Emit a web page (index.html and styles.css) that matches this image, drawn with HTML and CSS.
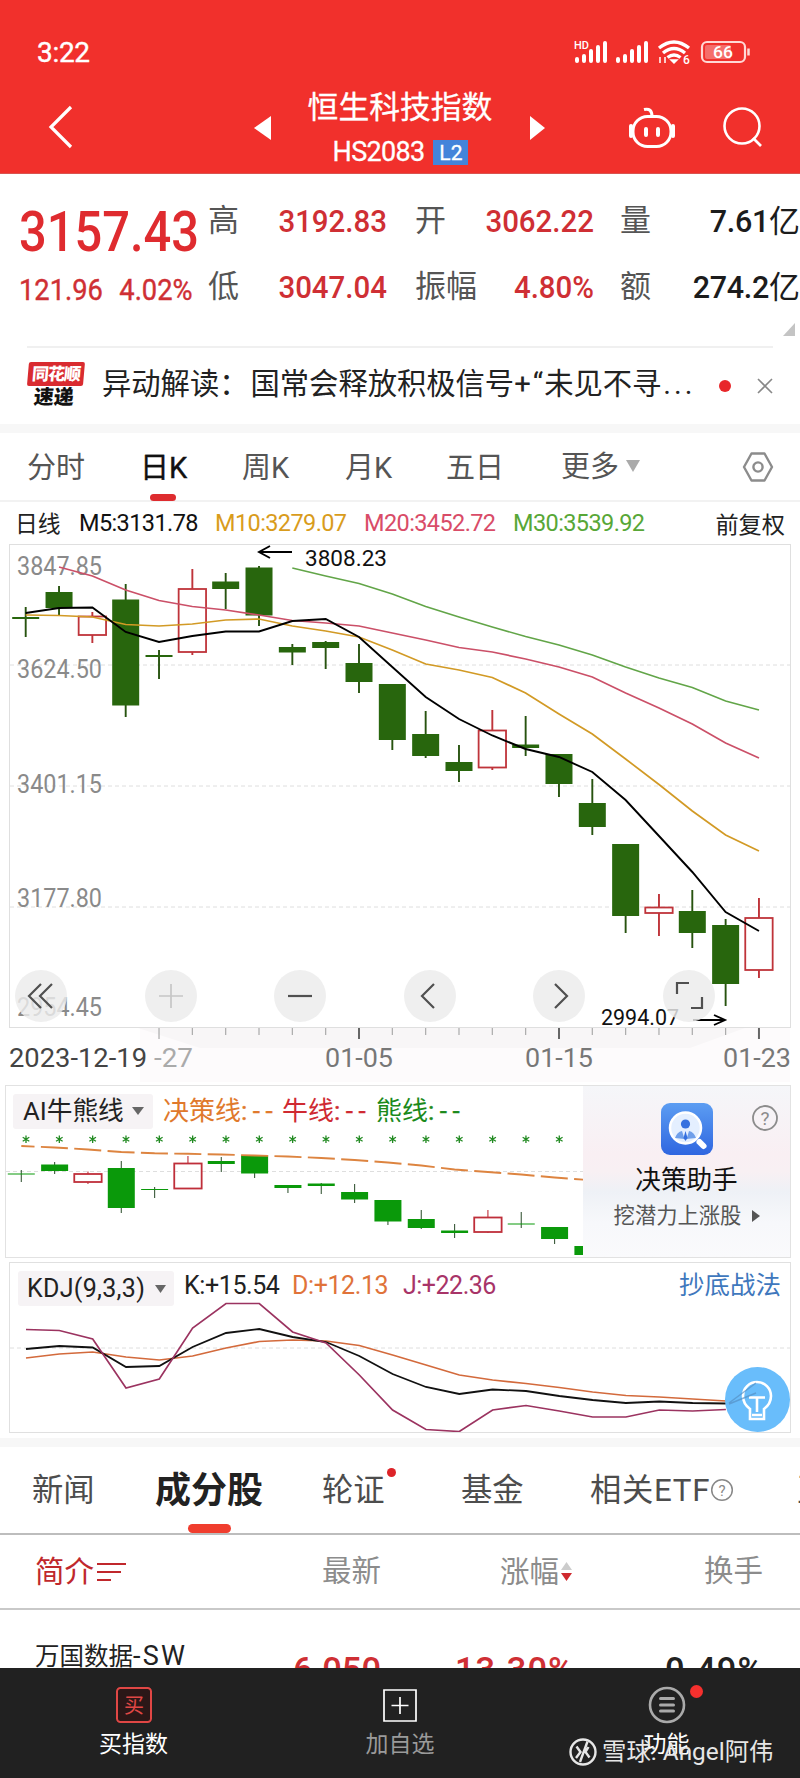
FILE: index.html
```html
<!DOCTYPE html>
<html lang="zh-CN">
<head>
<meta charset="utf-8">
<title>恒生科技指数</title>
<link rel="stylesheet" href="styles.css">
</head>
<body>
<main class="app">
  <header class="top">
    <div class="status">
      <span class="clock">3:22</span>
      <svg class="status-icons" width="180" height="28" viewBox="0 0 180 28">
        <text x="1" y="10" class="hd" textLength="15" lengthAdjust="spacingAndGlyphs">HD</text>
        <g stroke="#fff" stroke-width="4" stroke-linecap="round">
          <path d="M4 20v2M11 17v5M18 12v10M25 8v14M32 4v18"/>
          <path d="M45 20v2M52 17v5M59 12v10M66 8v14M73 4v18"/>
        </g>
        <g fill="none" stroke="#fff" stroke-width="3.400">
          <path d="M86 9q15-12 30 0M90 14q11-9 22 0M94.500 18.500q6.500-5 13 0"/>
        </g>
        <path d="M98 21h6l-3 3zM87 18v6M92 18v6" fill="#fff" stroke="#fff" stroke-width="1.500"/>
        <text x="110" y="25" class="six">6</text>
        <rect x="129" y="3" width="43" height="20" rx="5" fill="none" stroke="#ffd9d6" stroke-width="2.200"/>
        <rect x="132" y="6" width="26" height="14" rx="2" fill="#fff" opacity=".3"/>
        <path d="M175.500 9.500v7" stroke="#ffd9d6" stroke-width="2.500"/>
        <text x="140" y="19" class="batt" textLength="20" lengthAdjust="spacingAndGlyphs">66</text>
      </svg>
    </div>
    <div class="nav">
      <svg class="back" width="30" height="46" viewBox="0 0 30 46"><path d="M25 3 5 23l20 20" fill="none" stroke="#fff" stroke-width="3.200"/></svg>
      <svg class="prev" width="18" height="26"><path d="M17 1v24L0 13z" fill="#fff"/></svg>
      <div class="title">
        <div class="name">恒生科技指数</div>
        <div class="code"><span>HS2083</span><b class="l2">L2</b></div>
      </div>
      <svg class="next" width="18" height="26"><path d="M1 1v24l15-12z" fill="#fff"/></svg>
      <svg class="bot" width="48" height="44" viewBox="0 0 48 44" fill="none" stroke="#fff" stroke-width="3">
        <path d="M16 3.500q8-2 8 7"/><rect x="5" y="10.500" width="38" height="30" rx="14.500"/><path d="M3 20v10M45 20v10M18 23v6M30 23v6" stroke-width="4" stroke-linecap="round"/>
      </svg>
      <svg class="search" width="44" height="44" viewBox="0 0 44 44" fill="none" stroke="#fff" stroke-width="2.600"><circle cx="21" cy="20" r="17.500"/><path d="m32 32 8 8"/></svg>
    </div>
  </header>

  <section class="quote">
    <div class="price">3157.43</div>
    <div class="k">高</div><div class="v">3192.83</div>
    <div class="k">开</div><div class="v">3062.22</div>
    <div class="k">量</div><div class="v dark">7.61<i>亿</i></div>
    <div class="chg"><span>121.96</span><span>4.02%</span></div>
    <div class="k">低</div><div class="v">3047.04</div>
    <div class="k">振幅</div><div class="v">4.80%</div>
    <div class="k">额</div><div class="v dark">274.2<i>亿</i></div>
  </section>
  <div class="corner"><svg width="12" height="13"><path d="M12 0v13H0z" fill="#c4c4c4"/></svg></div>

  <section class="news">
    <div class="brand"><span class="brand-top">同花顺</span><span class="brand-bottom">速递</span></div>
    <div class="headline">异动解读：<span class="gap">国常会释放积极信号+</span><span class="gap wide">“</span>未见不寻<span class="more-dots">...</span></div>
    <span class="dot"></span>
    <svg class="close" width="16" height="16"><path d="m1 1 14 14M15 1 1 15" stroke="#888" stroke-width="1.600"/></svg>
  </section>

  <nav class="periods">
    <span>分时</span><span class="on">日K</span><span>周K</span><span>月K</span><span>五日</span>
    <span class="more">更多<svg width="14" height="13"><path d="M0 0h14L7 12z" fill="#aaa"/></svg></span>
    <svg class="gear" width="32" height="32" viewBox="0 0 32 32" fill="none" stroke="#8c8c8c" stroke-width="2.400"><path d="M9.500 2.500h13L30 16l-7.500 13.500h-13L2 16z" stroke-linejoin="round"/><circle cx="16" cy="16" r="4.600"/></svg>
  </nav>

  <div class="ma">
    <span class="m0">日线</span><span class="m5">M5:3131.78</span><span class="m10">M10:3279.07</span><span class="m20">M20:3452.72</span><span class="m30">M30:3539.92</span><span class="adj">前复权</span>
  </div>

  <section class="kchart">
    <svg id="kline" width="800" height="542" viewBox="0 540 800 542"></svg>
    <div class="tools">
      <button><svg viewBox="0 0 52 52"><path d="M26 14 14 26l12 12M37 14 25 26l12 12"/></svg></button>
      <button class="off"><svg viewBox="0 0 52 52"><path d="M26 14v24M14 26h24"/></svg></button>
      <button><svg viewBox="0 0 52 52"><path d="M14 26h24"/></svg></button>
      <button><svg viewBox="0 0 52 52"><path d="M30 14 18 26l12 12"/></svg></button>
      <button><svg viewBox="0 0 52 52"><path d="m22 14 12 12-12 12"/></svg></button>
      <button><svg viewBox="0 0 52 52"><path d="M14 24V13h12M28 38h11V27"/></svg></button>
    </div>
  </section>

  <section class="ai">
    <div class="ai-left">
      <div class="legend">
        <span class="pick">AI牛熊线<svg width="12" height="8"><path d="M0 0h12L6 8z" fill="#666"/></svg></span>
        <span class="orange">决策线<em>:--</em></span><span class="red">牛线<em>:--</em></span><span class="green">熊线<em>:--</em></span>
      </div>
      <svg id="aichart" width="577" height="128" viewBox="6 1129 577 128"></svg>
    </div>
    <aside class="promo">
      <svg width="52" height="52" viewBox="0 0 52 52">
        <defs><linearGradient id="pg" x1="0" y1="0" x2="0" y2="1"><stop offset="0" stop-color="#5c9df2"/><stop offset="1" stop-color="#2f66e0"/></linearGradient></defs>
        <rect width="52" height="52" rx="9" fill="url(#pg)"/>
        <path d="m38.500 39 4 4" stroke="#fff" stroke-width="6" stroke-linecap="round"/>
        <circle cx="24.500" cy="25" r="15.500" fill="#e4efff" stroke="#fff" stroke-width="2.500"/>
        <circle cx="24.500" cy="21" r="4.600" fill="#3570df"/>
        <path d="M14 35q2-6 7-7l2.500 8zM35 35q-2-6-7-7l-2.500 8z" fill="#6f9fea"/>
        <path d="m24.500 28 2 7-2 3-2-3z" fill="#3570df"/>
      </svg>
      <strong>决策助手</strong>
      <p>挖潜力上涨股<svg width="8" height="12"><path d="M0 0v12l8-6z" fill="#555"/></svg></p>
      <svg class="help" width="28" height="28" viewBox="0 0 28 28"><circle cx="14" cy="14" r="12" fill="none" stroke="#8c8c8c" stroke-width="1.800"/><text x="14" y="20.500" text-anchor="middle">?</text></svg>
    </aside>
  </section>

  <section class="kdj">
    <div class="legend">
      <span class="pick"><i>KDJ(9,3,3)</i><svg width="11" height="8"><path d="M0 0h11L5.500 8z" fill="#666"/></svg></span>
      <span class="kk">K:+15.54</span><span class="dd">D:+12.13</span><span class="jj">J:+22.36</span><a>抄底战法</a>
    </div>
    <svg id="kdjchart" width="780" height="133" viewBox="10 1299 780 133"></svg>
    <div class="bulb"><svg width="64" height="64" viewBox="0 0 64 64" fill="none" stroke="#fff" stroke-width="2.600"><path d="M25 52V42c-4-3-7-7-7-13a14 14 0 0 1 28 0c0 6-3 10-7 13v10zM24 30.500h16M32 31v14M27 48h10"/><path d="m4 36 27-20M4 37l27-11" stroke="#5590c4" stroke-width="1.500" opacity=".7"/></svg></div>
  </section>

  <nav class="tabs">
    <span>新闻</span><span class="on">成分股</span><span class="warr">轮证</span><span>基金</span>
    <span class="etf"><i>相关ETF</i><svg width="24" height="24" viewBox="0 0 24 24"><circle cx="12" cy="12" r="10.300" fill="none" stroke="#888" stroke-width="1.500"/><text x="12" y="17.500" text-anchor="middle">?</text></svg></span><span>互动</span>
  </nav>
  <div class="thead">
    <span class="intro">简介<svg width="29" height="20"><path d="M0 2h29M0 10h24M0 18h14" stroke="#c0282c" stroke-width="1.800"/></svg></span>
    <span>最新</span>
    <span class="rise">涨幅<svg width="12" height="20"><path d="M0 8h11L5.500 0z" fill="#ccc"/><path d="M0 11h11l-5.500 8z" fill="#cf2a2f"/></svg></span>
    <span>换手</span>
  </div>
  <div class="row">
    <span class="stock">万国数据<i>-SW</i></span><span class="n up">6.050</span><span class="n up">13.30%</span><span class="n">0.49%</span>
  </div>

  <footer class="bottom">
    <div class="item">
      <svg width="36" height="36" viewBox="0 0 36 36"><rect x="1" y="1" width="34" height="34" rx="3.500" fill="#2b1717" stroke="#e04745" stroke-width="2"/><text x="18" y="25.500" text-anchor="middle" class="buy">买</text></svg>
      <span>买指数</span>
    </div>
    <div class="item grey">
      <svg width="36" height="36" viewBox="0 0 36 36" fill="none" stroke="#fff" stroke-width="1.700"><path d="M2 3h32v31H2zM18 10v17M9.500 18.500h17"/></svg>
      <span>加自选</span>
    </div>
    <div class="item fn">
      <svg width="38" height="38" viewBox="0 0 38 38" fill="none" stroke="#aaa" stroke-width="2.600"><circle cx="19" cy="19" r="17"/><path d="M12.500 12.500h13M12.500 19h13M12.500 25h13" stroke-width="3" stroke-linecap="round"/></svg>
      <span>功能</span>
    </div>
    <div class="mark"><svg width="28" height="28" viewBox="0 0 28 28" fill="none" stroke="#e6e6e6" stroke-width="2.400"><circle cx="14" cy="14" r="12.500"/><path d="M7.500 8.500l4 5.500-4.500 6M18.500 3.500 11 24M19.500 9l-3 5 4 5.500"/></svg><span>雪球: Angel阿伟</span></div>
  </footer>
</main>
<script src="charts.js"></script>
</body>
</html>
```
FILE: styles.css
```css
* { box-sizing: border-box; }
body { margin: 0; background: #fff; }
.app { width: 800px; height: 1778px; overflow: hidden; display: flex; flex-direction: column; font-family: Roboto, "Noto Sans CJK SC", sans-serif; color: #222; white-space: nowrap; position: relative; }
.app > * { flex: none; }
svg { display: block; flex: none; }
i, em { font-style: normal; }

.top { height: 174px; background: #f1302c; color: #fff; border-bottom: 1px solid #d9534f; }
.status { height: 88px; padding: 36px 47px 0 37px; display: flex; justify-content: space-between; }
.clock { font-size: 28px; line-height: 34px; letter-spacing: -.3px; -webkit-text-stroke: .4px; }
.status-icons { margin-top: 3px; }
.status-icons text { fill: #fff; font-weight: 500; }
.hd { font-size: 11px; }
.six { font-size: 12px; }
.batt { font-size: 17px; }
.nav { display: flex; height: 85px; }
.back { margin: 16px 0 0 46px; }
.prev { margin: 27px 0 0 178px; }
.title { width: 220px; margin-left: 18px; text-align: center; }
.name { font-size: 30.800px; line-height: 38px; margin-top: 1px; -webkit-text-stroke: .3px; }
.code { display: flex; justify-content: center; align-items: center; gap: 9px; font-size: 27px; line-height: 30px; margin-top: 10px; letter-spacing: -.7px; padding-left: 1px; -webkit-text-stroke: .3px; }
.l2 { background: #4484da; font-weight: 400; font-size: 21px; width: 35px; height: 25px; line-height: 26px; letter-spacing: 0; }
.next { margin: 27px 0 0 19px; }
.bot { margin: 18px 0 0 81px; }
.search { margin: 18px 0 0 45px; }

.quote { height: 149px; padding: 12px 0 0 19px; display: grid; grid-template-columns: 189px 60px 147px 60px 145px 60px 120px; grid-template-rows: 66px 66px; }
.price { font-size: 55px; line-height: 92px; font-weight: 500; color: #df2b2f; transform: scaleX(.888); transform-origin: left; }
.k { line-height: 69px; font-size: 31px; color: #555; }
.v { width: 119px; line-height: 72px; font-size: 31px; font-weight: 500; color: #cf2f34; text-align: right; transform: scaleX(.95); transform-origin: right; }
.v.dark { color: #1c1c1c; width: 120px; transform: none; letter-spacing: -.3px; font-size: 30.500px; }
.v.dark i { font-size: 31px; font-weight: 400; letter-spacing: 0; }
.chg { line-height: 75px; font-size: 30px; color: #cf2f34; display: flex; gap: 18px; transform: scaleX(.91); transform-origin: left; -webkit-text-stroke: .4px; }
.corner { height: 23px; padding-left: 783px; }
.news { height: 78px; margin-left: 27px; width: 746px; border-top: 2px solid #f0f0f0; display: flex; align-items: center; }
.brand { width: 56px; height: 46px; display: flex; flex-direction: column; align-items: center; transform: translateY(-1px) skewX(-5deg); font-weight: 900; }
.brand-top { background: #d92b30; color: #fff; font-size: 17px; line-height: 24px; width: 56px; text-align: center; border-radius: 2px; letter-spacing: -1px; }
.brand-bottom { font-size: 20px; line-height: 22px; color: #111; }
.headline { font-size: 29.300px; margin: -4px 0 0 19px; width: 608px; color: #222; line-height: 40px; }
.gap { margin-left: 2px; }
.gap.wide { margin: 0 1px 0 2px; }
.more-dots { letter-spacing: 3px; margin-left: 2px; }
.dot { width: 12px; height: 12px; border-radius: 50%; background: #e8262a; margin-left: 9px; }
.close { margin-left: auto; }

.periods { height: 78px; border-top: 9px solid #f7f7f7; border-bottom: 2px solid #f2f2f2; display: flex; padding-left: 27px; line-height: 70px; font-size: 29px; color: #555; position: relative; }
.periods span:nth-child(1) { width: 113px; }
.periods span:nth-child(2) { width: 102px; }
.periods span:nth-child(3) { width: 103px; }
.periods span:nth-child(4) { width: 101px; }
.periods span:nth-child(5) { width: 115px; }
.periods .on { color: #111; position: relative; -webkit-text-stroke: .4px; }
.periods .on::after { content: ""; position: absolute; left: 10px; bottom: -1px; width: 26px; height: 7px; border-radius: 4px; background: #de2c2f; }
.more { display: flex; align-items: center; gap: 7px; }
.gear { position: absolute; left: 742px; top: 18px; }

.ma { height: 42px; display: flex; align-items: center; padding: 0 15px 1px 15px; font-size: 23.500px; color: #222; letter-spacing: -.6px; }
.ma .m0 { font-size: 22.800px; width: 64px; letter-spacing: 0; }
.m5 { width: 136px; color: #111; }
.m10 { width: 149px; color: #d99c1c; }
.m20 { width: 149px; color: #d94c68; }
.m30 { color: #58a737; }
.ma .adj { margin-left: auto; font-size: 23.200px; letter-spacing: 0; }

.kchart { height: 542px; margin-top: -4px; position: relative; }
.tools { position: absolute; left: 15px; top: 430px; width: 700px; display: flex; gap: 77.600px; }
.tools button { width: 52px; height: 52px; border: 0; padding: 0; border-radius: 50%; background: rgba(236,236,236,.82); flex: none; }
.tools path { fill: none; stroke: #505050; stroke-width: 2.200; }
.tools .off path { stroke: #c6c6c6; stroke-width: 1.700; }

.ai { margin: 3px 0 0 5px; width: 786px; height: 173px; border: 1px solid #e2e2e2; display: flex; }
.ai-left { width: 577px; }
.legend { display: flex; align-items: center; }
.ai .legend { height: 43px; padding: 7px 0 0 7px; font-size: 26px; line-height: 36px; }
.pick { background: #f6f3f5; border-radius: 3px; height: 35px; display: flex; align-items: center; color: #222; }
.ai .pick { width: 140px; padding-left: 10px; gap: 8px; font-size: 25.700px; }
.legend em { letter-spacing: 5.500px; -webkit-text-stroke: .4px; }
.orange { color: #e0792c; margin-left: 10px; width: 119px; }
.red { color: #cf2a32; width: 94px; }
.green { color: #1b8a1b; }
.promo { flex: 1; position: relative; background: linear-gradient(#f5f6f9 0, #f9eff3 40%, #f8f0f3 50%, #eef1f6 62%, #f7f8fb 80%, #fafafc); display: flex; flex-direction: column; align-items: center; padding-top: 17px; }
.promo strong { font-weight: 400; font-size: 25.600px; line-height: 30px; margin-top: 10px; color: #111; }
.promo p { margin: 7px 0 0 1px; display: flex; align-items: center; gap: 11px; font-size: 21.300px; line-height: 28px; color: #555; }
.help { position: absolute; right: 11px; top: 18px; }
.help text { font-size: 19px; fill: #8c8c8c; }

.kdj { position: relative; margin: 4px 0 0 9px; width: 782px; height: 171px; border: 1px solid #e0e0e0; }
.kdj .legend { height: 36px; padding-left: 8px; font-size: 25px; }
.kdj .pick { width: 156px; height: 35px; margin-top: 15px; padding-left: 9px; gap: 10px; }
.kdj .pick i { letter-spacing: .3px; }
.kk { width: 108px; margin-left: 10px; letter-spacing: -.4px; color: #222; padding-top: 8px; }
.dd { width: 111px; color: #e0733a; letter-spacing: -.4px; padding-top: 8px; }
.jj { color: #a83468; letter-spacing: -.5px; padding-top: 8px; }
.legend a { margin: 3px 9px 0 auto; color: #3f78bd; font-size: 25.500px; }
.bulb { position: absolute; left: 715px; top: 104px; width: 65px; height: 65px; border-radius: 50%; background: #69bdfb; }

.tabs { margin-top: 5px; height: 97px; border-top: 9px solid #f7f7f7; border-bottom: 2px solid #bdbdbd; padding-left: 32px; display: flex; font-size: 31.300px; line-height: 87px; color: #4d4d4d; overflow: hidden; }
.tabs span { flex: none; }
.tabs span:nth-child(1) { width: 123px; }
.tabs .on { width: 167px; font-size: 36px; font-weight: 700; color: #222; position: relative; line-height: 88px; }
.tabs .on::after { content: ""; position: absolute; left: 33px; bottom: 0; width: 43px; height: 9px; border-radius: 5px; background: #f03d2e; }
.warr { width: 139px; position: relative; }
.warr::after { content: ""; position: absolute; left: 65px; top: 21px; width: 9px; height: 9px; border-radius: 50%; background: #dd2429; }
.tabs span:nth-child(4) { width: 129px; }
.tabs .etf { display: flex; align-items: center; width: 207px; }
.etf i { letter-spacing: .7px; }
.etf text { font-size: 15px; fill: #888; }
.thead { height: 75px; border-bottom: 2px solid #c9c9c9; padding-left: 35px; display: flex; font-size: 29.500px; line-height: 72px; color: #8c8c8c; }
.intro { color: #c0282c; display: flex; align-items: center; gap: 3px; width: 287px; }
.thead span:nth-child(2) { width: 178px; }
.rise { display: flex; align-items: center; gap: 2px; width: 204px; }
.row { height: 58px; padding: 27px 0 0 35px; display: flex; overflow: hidden; font-size: 24.500px; line-height: 38px; }
.stock { width: 258px; }
.stock i { font-size: 27px; letter-spacing: 2.300px; }
.row .n { font-size: 34.500px; font-weight: 500; line-height: 73px; margin-top: -3px; }
.n:nth-child(2) { width: 162px; }
.n:nth-child(3) { width: 210px; letter-spacing: 1px; }
.n:nth-child(4) { letter-spacing: 1px; }
.row .up { color: #cf2f34; }
.bottom { height: 111px; background: #212121; display: grid; grid-template-columns: 267px 266px 267px; position: relative; color: #fff; }
.item { display: flex; flex-direction: column; align-items: center; font-size: 23px; padding-top: 19px; }
.item span { line-height: 34px; margin-top: 5px; }
.item.grey span { color: #9a9a9a; }
.item.fn { padding-top: 18px; position: relative; }
.item.fn span { margin-top: 4px; }
.fn::after { content: ""; position: absolute; left: 157px; top: 17px; width: 13px; height: 13px; border-radius: 50%; background: #f5302e; }
.buy { font-size: 20px; fill: #e04745; }
.mark { position: absolute; left: 569px; top: 68px; display: flex; align-items: center; gap: 5px; color: #e6e6e6; font-size: 24.400px; line-height: 32px; }
```
FILE: charts.js
```js
const STEP = 33.33;

function line(points, x0, start, color, width, extra) {
  const p = points.map((y, i) => (x0 + (start + i) * STEP).toFixed(1) + ',' + y).join(' ');
  return `<polyline points="${p}" fill="none" stroke="${color}" stroke-width="${width}" ${extra || ''}/>`;
}

// each candle: [top, bottom, wickTop, wickBottom, isRed]
function candles(data, x0, green, wick, red, ww) {
  return data.map(([t, b, wt, wb, r], i) => {
    const x = x0 + i * STEP;
    const c = r ? red : wick;
    if (r) {
      return `<path d="M${x} ${wt}V${t}M${x} ${b}V${wb}" stroke="${c}" stroke-width="${ww}"/>` +
        `<rect x="${x - 13.7}" y="${t}" width="27.4" height="${b - t}" fill="none" stroke="${c}" stroke-width="1.8"/>`;
    }
    return `<path d="M${x} ${wt}V${wb}" stroke="${c}" stroke-width="${ww}"/>` +
      `<rect x="${x - 13.5}" y="${t}" width="27" height="${b - t}" fill="${green}"/>`;
  }).join('');
}

function text(s, x, y, w, size, color) {
  return `<text x="${x}" y="${y}" font-size="${size}" fill="${color}" textLength="${w}" lengthAdjust="spacingAndGlyphs">${s}</text>`;
}

const dash = (y, x1, x2) => `<path d="M${x1} ${y}H${x2}" stroke="#dedede" stroke-dasharray="4 3"/>`;

let k = '<rect x="9.5" y="544.5" width="781" height="483" fill="#fff" stroke="#dfdfdf"/>';
k += '<rect x="140" y="1028" width="650" height="54" fill="#fdfbfc"/><path d="M138 1028H745L690 1048H200z" fill="#f8f6f7"/>';
k += dash(665, 10, 790) + dash(786, 10, 790) + dash(907, 10, 790);
[['3847.85', 575], ['3624.50', 678], ['3401.15', 793], ['3177.80', 907], ['2954.45', 1016]]
  .forEach(([s, y]) => { k += text(s, 17, y, 85, 25, '#8a8a8a'); });
k += candles([
  [617, 619, 607, 637], [592, 608, 586, 615], [616.5, 635, 612, 643, 1], [599.5, 705.5, 584, 717],
  [655, 657, 650, 679], [589, 652, 569, 655, 1], [581.5, 589, 573, 609], [567.5, 615.5, 566, 626],
  [647, 652.5, 644, 665], [642, 648, 641, 669], [663, 682, 644, 693], [684, 740, 684, 750],
  [734, 756, 711, 758], [762, 771, 745, 782], [730.5, 767.5, 710, 770, 1], [744.5, 748, 716, 756],
  [754, 784, 754, 797], [803, 827, 779, 835], [844, 916, 844, 933], [907.5, 913, 894, 936, 1],
  [911, 933, 890, 948], [925, 984, 919, 1006], [918, 970, 898, 978, 1]
], 25.7, '#28660d', '#27530f', '#bf343a', 1.9);
k += line([568, 576, 583.5, 594, 606.5, 617, 627, 636.5, 645, 655, 667, 678, 687.5, 701, 710], 25.7, 8, '#62a548', 1.6);
k += line([567, 576, 590, 600.5, 606.5, 610, 615, 620.5, 623, 626, 633, 640, 647.5, 652, 659, 667, 677, 693, 708, 724, 743, 758], 25.7, 1, '#cb5068', 1.7);
k += line([615, 615.5, 617, 624.5, 626, 624, 620, 619, 626, 631, 637, 650, 664, 670, 677.5, 693, 714, 734, 759, 784.5, 811, 835, 851], 25.7, 0, '#d29a25', 1.7);
k += line([613, 608, 607.5, 632, 642, 636, 631.5, 631.5, 621, 619, 637, 667, 697, 719, 735.5, 749, 757, 772, 800, 836, 872, 912, 931], 25.7, 0, '#000', 1.9);
k += '<path d="M292 552H259M270 546l-11 6 11 6M693 1020H725M714 1015l11 5-11 5" fill="none" stroke="#000" stroke-width="1.9"/>';
k += text('3808.23', 305, 566, 82, 22.5, '#111') + text('2994.07', 601, 1025, 78, 22.5, '#111');
for (let i = 4; i <= 22; i++) {
  const x = 25.7 + i * STEP, major = i === 10 || i === 16 || i === 22;
  k += `<path d="M${x} 1028V${major || i === 4 ? 1039 : 1035}" stroke="${major ? '#666' : '#aaa'}" stroke-width="${major ? 2 : 1.2}"/>`;
}
k += text('2023-12-19', 9, 1066.5, 138, 25, '#444') + text('-27', 154, 1066.5, 39, 25, '#aaa');
k += text('01-05', 325, 1066.5, 68, 25, '#777') + text('01-15', 525, 1066.5, 68, 25, '#777') + text('01-23', 723, 1066.5, 68, 25, '#777');
document.getElementById('kline').innerHTML = k;

let a = dash(1171.5, 6, 583);
a += candles([
  [1173.5, 1174.5, 1170, 1182], [1164.5, 1171, 1162, 1174], [1174, 1182, 1171.5, 1184, 1], [1168, 1208, 1161, 1213],
  [1189, 1190, 1187, 1198], [1163.5, 1188.5, 1156, 1189, 1], [1161, 1164, 1157, 1172], [1155, 1173.5, 1155, 1178],
  [1185, 1188, 1185, 1193], [1183.5, 1186, 1183, 1194], [1192, 1199.5, 1184, 1203], [1200, 1221.5, 1200, 1225],
  [1219, 1228, 1210, 1229], [1230.5, 1233, 1224, 1238], [1217.5, 1232, 1210, 1233, 1], [1223.5, 1224.5, 1212, 1228],
  [1227, 1239, 1227, 1244], [1246, 1255, 1246, 1255]
], 21.3, '#0a990a', '#3a5a3a', '#bf2f3a', 1.1);
a += line([1146, 1147.5, 1149.5, 1152, 1153.3, 1153.8, 1154.5, 1155.5, 1156.5, 1158, 1160, 1162.5, 1165.5, 1169.5, 1172, 1174.5, 1177.5, 1180], 21.3, 0, '#dd8440', 1.9, 'stroke-dasharray="27.05 6.35" stroke-dashoffset="13.8"');
for (let i = 0; i < 17; i++) {
  const x = 26 + i * STEP;
  a += `<path d="M${x} 1135.500v7.500M${x - 3.300} 1137.300l6.600 3.900M${x + 3.300} 1137.300l-6.600 3.900" stroke="#218a21" stroke-width="1.300"/>`;
}
document.getElementById('aichart').innerHTML = a;

let d = dash(1348, 10, 790);
d += line([1358, 1354, 1352, 1357, 1360, 1356, 1348, 1341.5, 1340, 1341, 1345.5, 1355, 1365, 1375, 1380, 1383.5, 1387.5, 1392, 1395.5, 1397, 1399, 1401], 26, 0, '#d36a3c', 1.7);
d += line([1349, 1346, 1347.5, 1367, 1366, 1347, 1333, 1329, 1337, 1342, 1356, 1374, 1387, 1394, 1389.5, 1391, 1396, 1400, 1403, 1401.5, 1403, 1403.5], 26, 0, '#111', 1.8);
d += line([1329.5, 1330.5, 1339, 1388, 1379, 1328, 1303.5, 1303.5, 1332, 1343, 1375, 1410, 1429.5, 1431.5, 1410, 1405.5, 1411, 1417, 1417, 1410, 1411, 1409.5], 26, 0, '#9b3360', 1.7);
document.getElementById('kdjchart').innerHTML = d;
```
